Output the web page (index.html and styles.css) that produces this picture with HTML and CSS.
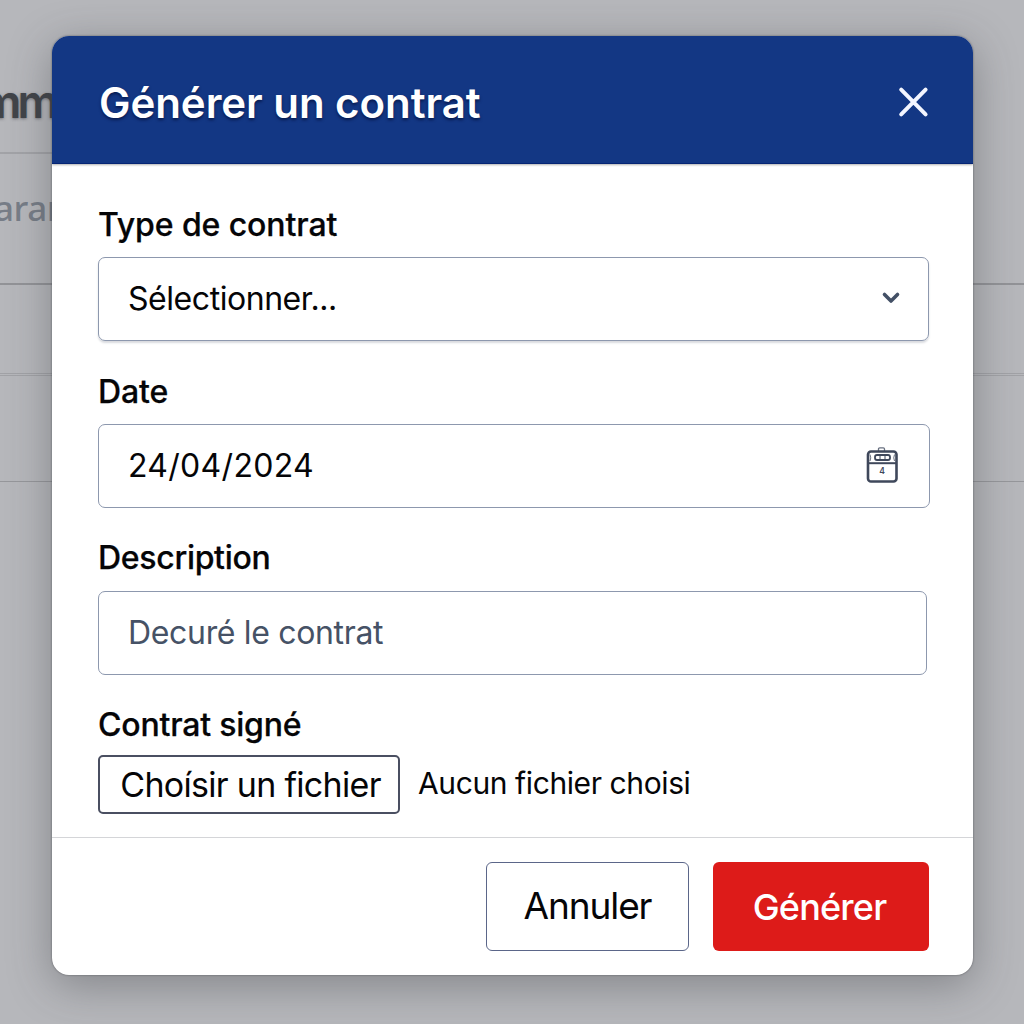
FILE: index.html
```html
<!DOCTYPE html>
<html lang="fr">
<head>
<meta charset="utf-8">
<title>Générer un contrat</title>
<link rel="stylesheet" href="styles.css">
</head>
<body>
<div class="page">
  <div class="page-row page-title">mm</div>
  <div class="page-row page-tab">aran</div>
  <div class="page-row page-line"></div>
  <div class="page-row page-line-last"></div>
</div>
<section class="modal" role="dialog" aria-labelledby="title">
  <header class="modal-header">
    <h1 id="title" class="modal-title"><span>Générer un contrat</span></h1>
    <svg class="close" width="32" height="32" viewBox="0 0 32 32"><path d="M4.200 3.700 28.600 28.300M28.600 3.700 4.200 28.300"/></svg>
  </header>
  <div class="modal-body">
    <div class="field">
      <div class="label label-type"><span>Type de contrat</span></div>
      <div class="control control-select">
        <span class="value value-select">Sélectionner...</span>
        <svg class="chevron" width="20" height="16" viewBox="0 0 20 16"><path d="M3.500 3.500 10 10 16.500 3.500"/></svg>
      </div>
    </div>
    <div class="field">
      <div class="label label-date"><span>Date</span></div>
      <div class="control control-date">
        <span class="value value-date">24/04/2024</span>
        <svg class="calendar" width="34" height="40" viewBox="0 0 34 40">
          <path class="handle" d="M12.500 5V3Q12.500 1.800 13.700 1.800H17.300Q18.500 1.800 18.500 3V5"/>
          <rect class="frame" x="2" y="5.500" width="28.500" height="30" rx="3"/>
          <path class="rule" d="M2 17.200H30.500"/>
          <path class="notch" d="M4 8.500Q5.500 12 4 15M28.500 8.500Q27 12 28.500 15"/>
          <rect class="pill" x="9" y="9" width="15" height="5" rx="2"/>
          <path class="ticks" d="M14 9V14M19 9V14"/>
          <text x="16" y="27.500" text-anchor="middle">4</text>
        </svg>
      </div>
    </div>
    <div class="field">
      <div class="label label-desc"><span>Description</span></div>
      <div class="control control-desc"><span class="value value-desc">Decuré le contrat</span></div>
    </div>
    <div class="field">
      <div class="label label-file"><span>Contrat signé</span></div>
      <div class="file-row">
        <div class="file-button"><span>Choísir un fichier</span></div>
        <span class="file-name">Aucun fichier choisi</span>
      </div>
    </div>
  </div>
  <footer class="modal-footer">
    <div class="button cancel"><span>Annuler</span></div>
    <div class="button submit"><span>Générer</span></div>
  </footer>
</section>
</body>
</html>
```
FILE: styles.css
```css
* { box-sizing: border-box; }
body {
  margin: 0;
  width: 1024px;
  height: 1024px;
  overflow: hidden;
  position: relative;
  background: #b6b7bb;
  font-family: Inter, "Liberation Sans", sans-serif;
  color: #050507;
}
.page { display: flex; flex-direction: column; }
.page-row { flex: none; white-space: nowrap; }
.page-title {
  width: 100px;
  height: 154px;
  padding-top: 77px;
  border-bottom: 2px solid #a2a3a7;
  font-size: 46px;
  line-height: 48px;
  font-weight: 600;
  letter-spacing: -4px;
  text-indent: -20px;
  color: #414449;
  text-shadow: 0 1px 3px rgba(50, 50, 55, .5);
}
.page-tab {
  height: 131px;
  padding-top: 31px;
  border-bottom: 2px solid #929397;
  font-family: "Noto Sans", sans-serif;
  font-size: 35px;
  line-height: 46px;
  font-weight: 500;
  letter-spacing: -.5px;
  color: #777d87;
  text-indent: -6px;
}
.page-line { height: 91px; border-bottom: 3px double #a1a2a6; }
.page-line-last { height: 106px; border-bottom: 1px solid #96979b; }

.modal {
  position: absolute;
  left: 52px;
  top: 36px;
  width: 921px;
  height: 939px;
  border-radius: 17px;
  background: #fff;
  display: flex;
  flex-direction: column;
  overflow: hidden;
  box-shadow: 0 0 2px rgba(60, 62, 65, .75), 0 10px 44px rgba(55, 58, 62, .4);
}
.modal-header {
  height: 128px;
  flex: none;
  padding: 5px 44px 0 47px;
  display: flex;
  align-items: center;
  justify-content: space-between;
  background: #133784;
  border-bottom: 1px solid #062574;
  box-shadow: 0 1px 2px rgba(30, 30, 30, .35);
}
.modal-title {
  margin: 0;
  padding-top: 2px;
  font-size: 42px;
  line-height: 52px;
  font-weight: 600;
  letter-spacing: -.05px;
  color: #fff;
  text-shadow: 0 2px 3px rgba(0, 10, 50, .65);
}
.close path { stroke: #f3f5ff; stroke-width: 4; stroke-linecap: round; }
.modal-body {
  flex: 1;
  padding: 41px 43px 0 46px;
  display: flex;
  flex-direction: column;
  gap: 31px;
}
.label {
  height: 40px;
  margin-bottom: 12px;
  font-size: 32px;
  line-height: 40px;
  font-weight: 500;
  letter-spacing: -.1px;
  -webkit-text-stroke: .25px currentColor;
}
.label-desc { letter-spacing: -.3px; line-height: 38px; }
.label-file { margin: -1px 0 10px; letter-spacing: -.2px; }
.control {
  height: 84px;
  padding: 0 29px;
  border: 1.500px solid #8d98ae;
  border-radius: 7px;
  display: flex;
  align-items: center;
  justify-content: space-between;
}
.control-select { width: 831px; padding-right: 27px; box-shadow: 0 2px 2px rgba(80, 90, 110, .22); }
.control-date { width: 832px; padding-right: 29px; }
.control-desc { width: 829px; }
.value { font-size: 32px; line-height: 40px; white-space: nowrap; }
.value-select { letter-spacing: -.45px; }
.value-date { letter-spacing: .3px; }
.value-desc { color: #465266; letter-spacing: -.33px; }
.chevron path { fill: none; stroke: #435066; stroke-width: 3.600; stroke-linecap: round; stroke-linejoin: round; }
.calendar { fill: none; stroke: #3f485b; }
.calendar .frame { stroke-width: 2.600; }
.calendar .rule { stroke-width: 2; }
.calendar .handle { stroke: #687080; stroke-width: 1.300; }
.calendar .notch { stroke-width: .8; }
.calendar .pill { stroke-width: 1.800; }
.calendar .ticks { stroke-width: 1; }
.calendar text { fill: #3f485b; stroke: none; font-size: 8.500px; font-weight: 600; }
.file-row { display: flex; align-items: center; gap: 18px; }
.file-button {
  width: 302px;
  height: 59px;
  padding-left: 3px;
  border: 2px solid #4a4f61;
  border-radius: 5px;
  display: flex;
  align-items: center;
  justify-content: center;
  font-size: 34px;
  letter-spacing: -.7px;
  white-space: nowrap;
}
.file-name {
  padding-bottom: 3px;
  font-size: 30px;
  line-height: 36px;
  letter-spacing: -.4px;
  white-space: nowrap;
}
.modal-footer {
  height: 138px;
  flex: none;
  border-top: 1px solid #d4d5d8;
  padding: 24px 44px 0;
  display: flex;
  justify-content: flex-end;
  gap: 24px;
}
.button {
  height: 89px;
  border-radius: 6px;
  display: flex;
  align-items: center;
  justify-content: center;
  font-size: 36px;
}
.cancel { width: 203px; padding-bottom: 3px; border: 1.500px solid #5b6689; font-size: 37px; letter-spacing: -1.100px; }
.submit { width: 216px; padding-right: 3px; background: #dd1b19; color: #fff; font-weight: 500; letter-spacing: -.8px; }
```
